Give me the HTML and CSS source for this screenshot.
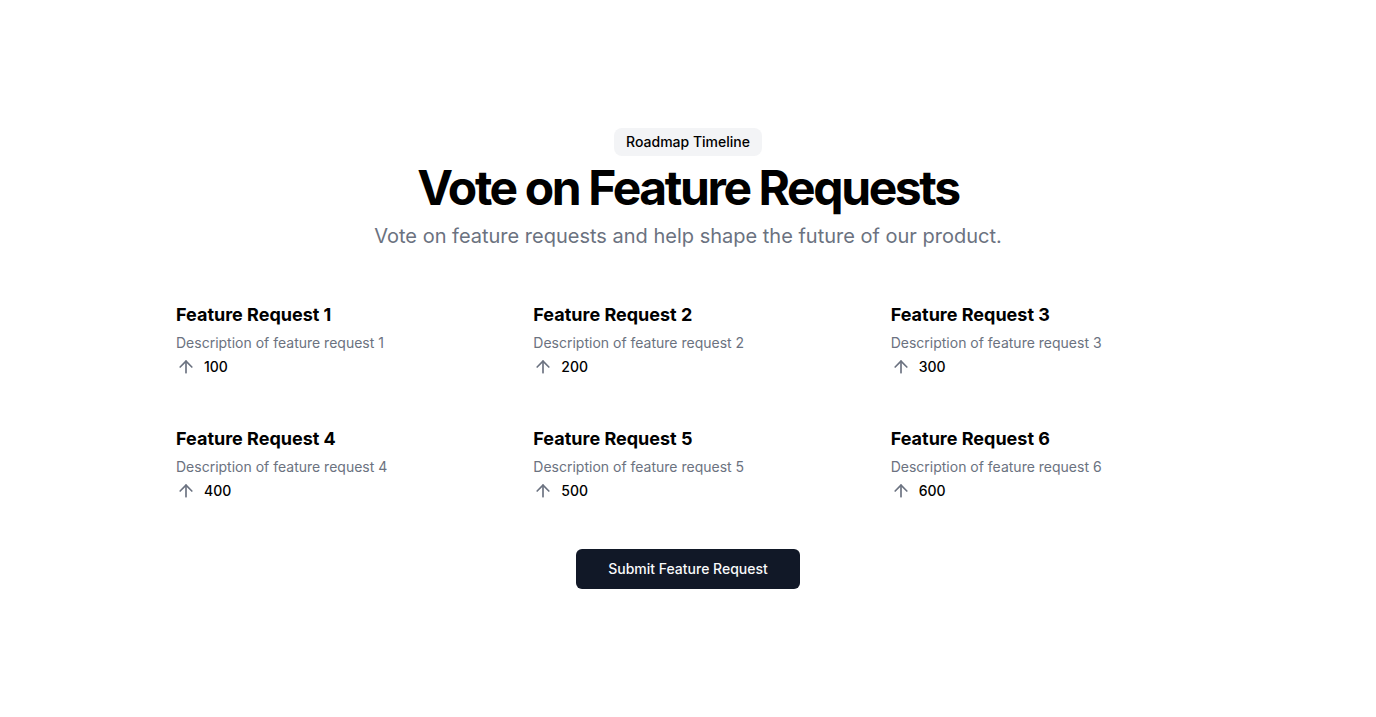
FILE: index.html
```html
<!DOCTYPE html>
<html lang="en">
<head>
<meta charset="utf-8">
<title>Vote on Feature Requests</title>
<link rel="stylesheet" href="styles.css">
</head>
<body>
<main class="page">
  <section class="wrap">
    <header class="intro">
      <div class="badge">Roadmap Timeline</div>
      <h1 class="title">Vote on Feature Requests</h1>
      <p class="lead">Vote on feature requests and help shape the future of our product.</p>
    </header>
    <div class="grid">
      <div class="card">
        <h3 class="card-title">Feature Request 1</h3>
        <p class="card-desc">Description of feature request 1</p>
        <div class="votes"><svg class="arrow" viewBox="0 0 24 24"><path d="m5 12 7-7 7 7"/><path d="M12 19V5"/></svg><span>100</span></div>
      </div>
      <div class="card">
        <h3 class="card-title">Feature Request 2</h3>
        <p class="card-desc">Description of feature request 2</p>
        <div class="votes"><svg class="arrow" viewBox="0 0 24 24"><path d="m5 12 7-7 7 7"/><path d="M12 19V5"/></svg><span>200</span></div>
      </div>
      <div class="card">
        <h3 class="card-title">Feature Request 3</h3>
        <p class="card-desc">Description of feature request 3</p>
        <div class="votes"><svg class="arrow" viewBox="0 0 24 24"><path d="m5 12 7-7 7 7"/><path d="M12 19V5"/></svg><span>300</span></div>
      </div>
      <div class="card">
        <h3 class="card-title">Feature Request 4</h3>
        <p class="card-desc">Description of feature request 4</p>
        <div class="votes"><svg class="arrow" viewBox="0 0 24 24"><path d="m5 12 7-7 7 7"/><path d="M12 19V5"/></svg><span>400</span></div>
      </div>
      <div class="card">
        <h3 class="card-title">Feature Request 5</h3>
        <p class="card-desc">Description of feature request 5</p>
        <div class="votes"><svg class="arrow" viewBox="0 0 24 24"><path d="m5 12 7-7 7 7"/><path d="M12 19V5"/></svg><span>500</span></div>
      </div>
      <div class="card">
        <h3 class="card-title">Feature Request 6</h3>
        <p class="card-desc">Description of feature request 6</p>
        <div class="votes"><svg class="arrow" viewBox="0 0 24 24"><path d="m5 12 7-7 7 7"/><path d="M12 19V5"/></svg><span>600</span></div>
      </div>
    </div>
    <div class="actions">
      <button class="submit" type="button">Submit Feature Request</button>
    </div>
  </section>
</main>
</body>
</html>
```

FILE: styles.css
```css
* { box-sizing: border-box; }
html, body { margin: 0; padding: 0; }
body {
  font-family: Inter, "Noto Sans", sans-serif;
  color: #000;
  background: #fff;
}
.page {
  min-height: 100vh;
  display: flex;
  align-items: center;
  justify-content: center;
}
.wrap {
  width: 100%;
  padding: 0 24px;
  display: flex;
  flex-direction: column;
  align-items: center;
}
.intro {
  display: flex;
  flex-direction: column;
  align-items: center;
  text-align: center;
  gap: 8px;
}
.badge {
  display: inline-block;
  background: #f3f4f6;
  border-radius: 8px;
  padding: 4px 12px;
  font-size: 14px;
  line-height: 20px;
  font-weight: 500;
}
.title {
  margin: 0;
  font-size: 48px;
  line-height: 1;
  font-weight: 700;
  letter-spacing: -0.05em;
}
.lead {
  margin: 0;
  max-width: 900px;
  font-size: 20px;
  line-height: 1.625;
  color: #6b7280;
}
.grid {
  width: 100%;
  max-width: 1024px;
  display: grid;
  grid-template-columns: repeat(3, 1fr);
  gap: 48px;
  padding: 48px 0;
}
.card {
  display: grid;
  gap: 4px;
}
.card-title {
  margin: 0;
  font-size: 18px;
  line-height: 28px;
  font-weight: 700;
}
.card-desc {
  margin: 0;
  font-size: 14px;
  line-height: 20px;
  color: #6b7280;
}
.votes {
  display: flex;
  align-items: center;
  gap: 8px;
  font-size: 14px;
  line-height: 20px;
  font-weight: 500;
}
.arrow {
  width: 20px;
  height: 20px;
  fill: none;
  stroke: #6b7280;
  stroke-width: 2;
  stroke-linecap: round;
  stroke-linejoin: round;
}
.actions {
  display: flex;
  justify-content: center;
}
.submit {
  height: 40px;
  padding: 0 32px;
  border: 0;
  border-radius: 6px;
  background: #111827;
  color: #f9fafb;
  font-family: Inter, "Noto Sans", sans-serif;
  font-size: 14px;
  font-weight: 500;
}
```
